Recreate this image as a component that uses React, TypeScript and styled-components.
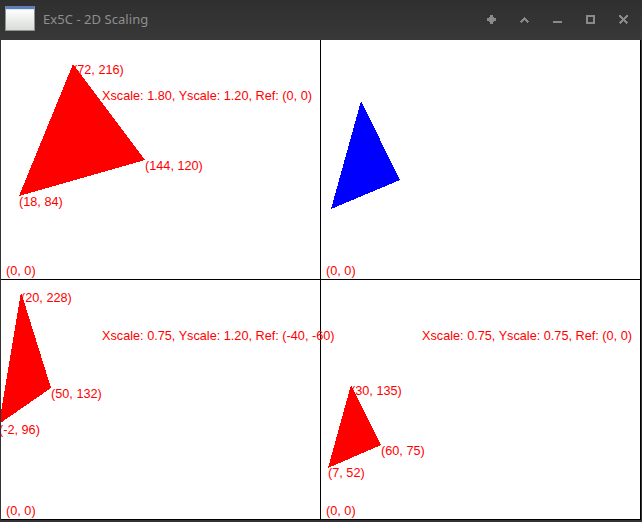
import styled, { createGlobalStyle } from "styled-components";

const GlobalStyle = createGlobalStyle`
  html, body {
    margin: 0;
    padding: 0;
    background: #333333;
  }
  #root {
    width: 642px;
    height: 522px;
  }
`;

const Window = styled.div`
  width: 642px;
  height: 522px;
  display: flex;
  flex-direction: column;
  background: #333333;
  overflow: hidden;
`;

const TitleBar = styled.div`
  height: 40px;
  flex: none;
  display: flex;
  align-items: center;
  padding-left: 5px;
  background: linear-gradient(#2f2f2f, #383838);
  font-family: "Noto Sans", "DejaVu Sans", sans-serif;
`;

const AppIcon = styled.div`
  width: 28px;
  height: 21px;
  border: 1px solid #8e9392;
  border-top: 3px solid #5b80b8;
  box-shadow: inset 0 1px 0 #dfe6ee;
  background: linear-gradient(#ffffff, #d9dcd9);
  margin-top: -4px;
`;

const Title = styled.span`
  margin-left: 8px;
  margin-top: -3px;
  font-size: 13px;
  color: #8f8f8f;
  letter-spacing: 0.05px;
`;

const Controls = styled.div`
  margin-left: auto;
  margin-right: 14px;
  margin-top: -2px;
  display: flex;
  gap: 24px;
  color: #8a8a8a;
`;

const ControlIcon = styled.svg`
  width: 9px;
  height: 9px;
  display: block;
  shape-rendering: crispEdges;
`;

const Canvas = styled.div`
  width: 640px;
  height: 480px;
  margin-left: 1px;
  background: #ffffff;
  display: grid;
  grid-template-columns: 320px 320px;
  grid-template-rows: 240px 240px;
  overflow: hidden;
`;

const Panel = styled.div`
  box-sizing: border-box;
  border-right: 1px solid #000000;
  border-bottom: 1px solid #000000;
  position: relative;
`;

const Plot = styled.svg`
  overflow: visible;
  vertical-align: top;
  font-family: "Liberation Sans", Arial, sans-serif;
  font-size: 12.7px;
`;

type Label = { x: number; y: number; text: string };
type Shape = { color: string; points: number[][]; labels: Label[] };

const shapes: Shape[] = [
  {
    color: "#ff0000",
    points: [[72, 24], [144, 120], [18, 156]],
    labels: [
      { x: 72, y: 34, text: "(72, 216)" },
      { x: 101, y: 60, text: "Xscale: 1.80, Yscale: 1.20, Ref: (0, 0)" },
      { x: 144, y: 130, text: "(144, 120)" },
      { x: 18, y: 166, text: "(18, 84)" },
      { x: 5, y: 235, text: "(0, 0)" },
    ],
  },
  {
    color: "#0000ff",
    points: [[40, 61], [79, 140], [10, 169]],
    labels: [{ x: 5, y: 235, text: "(0, 0)" }],
  },
  {
    color: "#ff0000",
    points: [[20, 12], [50, 108], [-2, 144]],
    labels: [
      { x: 20, y: 22, text: "(20, 228)" },
      { x: 101, y: 60, text: "Xscale: 0.75, Yscale: 1.20, Ref: (-40, -60)" },
      { x: 50, y: 118, text: "(50, 132)" },
      { x: -2, y: 154, text: "(-2, 96)" },
      { x: 5, y: 235, text: "(0, 0)" },
    ],
  },
  {
    color: "#ff0000",
    points: [[30, 105], [60, 165], [7, 188]],
    labels: [
      { x: 101, y: 60, text: "Xscale: 0.75, Yscale: 0.75, Ref: (0, 0)" },
      { x: 30, y: 115, text: "(30, 135)" },
      { x: 60, y: 175, text: "(60, 75)" },
      { x: 7, y: 197, text: "(7, 52)" },
      { x: 5, y: 235, text: "(0, 0)" },
    ],
  },
];

const ScalePanel = ({ shape }: { shape: Shape }) => (
  <Panel>
    <Plot width={319} height={239}>
      <polygon
        points={shape.points.map((p) => p.join(",")).join(" ")}
        fill={shape.color}
        shapeRendering="crispEdges"
      />
      {shape.labels.map((l) => (
        <text key={l.text + l.y} x={l.x} y={l.y} fill="#ff0000">
          {l.text}
        </text>
      ))}
    </Plot>
  </Panel>
);

const App = () => {
  return (
    <Window>
      <GlobalStyle />
      <TitleBar>
        <AppIcon />
        <Title>Ex5C - 2D Scaling</Title>
        <Controls>
          <ControlIcon viewBox="0 0 9 9">
            <path d="M3 0h3v2h1v1h2v3h-2v1h-1v2h-3v-2h-1v-1h-2v-3h2v-1h1z" fill="currentColor" />
          </ControlIcon>
          <ControlIcon viewBox="0 0 9 9">
            <path d="M0.5 7.5L4.5 3.5L8.5 7.5" stroke="currentColor" strokeWidth="2" fill="none" />
          </ControlIcon>
          <ControlIcon viewBox="0 0 9 9">
            <rect x="0" y="6" width="9" height="2" fill="currentColor" />
          </ControlIcon>
          <ControlIcon viewBox="0 0 9 9">
            <rect x="1" y="1" width="7" height="7" stroke="currentColor" strokeWidth="2" fill="none" />
          </ControlIcon>
          <ControlIcon viewBox="0 0 9 9">
            <path d="M0.5 0.5L8.5 8.5M8.5 0.5L0.5 8.5" stroke="currentColor" strokeWidth="2" fill="none" />
          </ControlIcon>
        </Controls>
      </TitleBar>
      <Canvas>
        {shapes.map((s, i) => (
          <ScalePanel key={i} shape={s} />
        ))}
      </Canvas>
    </Window>
  );
};

export default App;
